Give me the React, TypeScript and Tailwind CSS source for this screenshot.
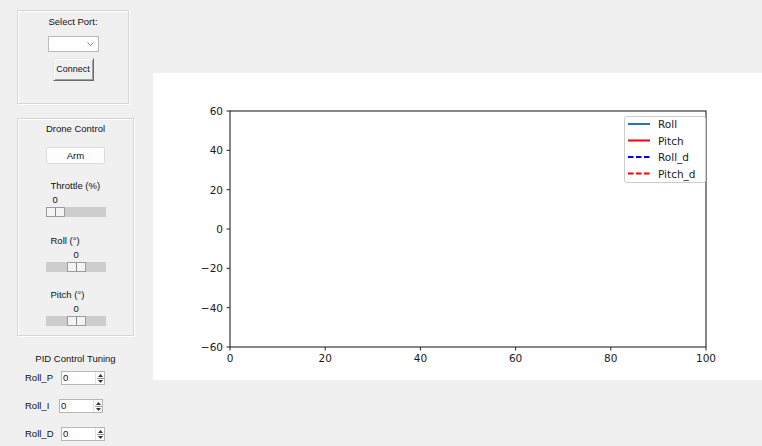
import React from "react";

// plot area inside the white canvas (canvas origin = 0,0)
const AX = { left: 77, right: 553, top: 38, bottom: 274 };
const yTicks = [60, 40, 20, 0, -20, -40, -60];
const xTicks = [0, 20, 40, 60, 80, 100];

const yPos = (v: number) => AX.top + ((60 - v) / 120) * (AX.bottom - AX.top);
const xPos = (v: number) => AX.left + (v / 100) * (AX.right - AX.left);
const fmt = (v: number) => (v < 0 ? `\u2212${Math.abs(v)}` : `${v}`);

const legend = [
  { label: "Roll", color: "#1f77b4", dash: undefined },
  { label: "Pitch", color: "#ff0000", dash: undefined },
  { label: "Roll_d", color: "#0000ff", dash: "5.5 2.5" },
  { label: "Pitch_d", color: "#ff0000", dash: "5.5 2.5" },
];

function Plot() {
  return (
    <svg width="609" height="307" className="block" style={{ fontFamily: '"DejaVu Sans", sans-serif' }}>
      <rect x={AX.left} y={AX.top} width={AX.right - AX.left} height={AX.bottom - AX.top} fill="#fff" stroke="#262626" strokeWidth="1.1" />
      {yTicks.map((v) => (
        <g key={v}>
          <line x1={AX.left - 3.5} x2={AX.left} y1={yPos(v)} y2={yPos(v)} stroke="#262626" />
          <text x={AX.left - 7} y={yPos(v)} fontSize="10.5" fill="#1a1a1a" textAnchor="end" dominantBaseline="central">
            {fmt(v)}
          </text>
        </g>
      ))}
      {xTicks.map((v) => (
        <g key={v}>
          <line x1={xPos(v)} x2={xPos(v)} y1={AX.bottom} y2={AX.bottom + 3.5} stroke="#262626" />
          <text x={xPos(v)} y={AX.bottom + 11} fontSize="10.5" fill="#1a1a1a" textAnchor="middle" dominantBaseline="central">
            {v}
          </text>
        </g>
      ))}
      <rect x="471.5" y="43.5" width="81" height="66" rx="2" fill="#fff" fillOpacity="0.8" stroke="#cccccc" />
      {legend.map((l, i) => {
        const y = 51 + i * 16.5;
        return (
          <g key={l.label}>
            <line x1="475" x2="497" y1={y} y2={y} stroke={l.color} strokeWidth="2" strokeDasharray={l.dash} />
            <text x="505" y={y} fontSize="10.5" fill="#1a1a1a" dominantBaseline="central">
              {l.label}
            </text>
          </g>
        );
      })}
    </svg>
  );
}

function Scale({ label, thumb, labelTop }: { label: string; thumb: number; labelTop: string }) {
  // thumb = left offset of the slider knob inside the 60px trough
  return (
    <div className={`w-[60px] flex flex-col ${labelTop}`}>
      <div className="pl-[5px] leading-[12px]">{label}</div>
      <div className="mt-[2px] leading-[12px]" style={{ paddingLeft: thumb + 7 }}>
        0
      </div>
      <div className="mt-[1px] h-[10px] bg-[#cdcdcd] flex">
        <div
          className="h-[10px] w-[19px] bg-[#f4f4f4] border border-[#9c9c9c] flex justify-center"
          style={{ marginLeft: thumb }}
        >
          <div className="w-px h-full bg-[#8a8a8a]" />
        </div>
      </div>
    </div>
  );
}

function Spin({ label, labelW }: { label: string; labelW: string }) {
  return (
    <div className="flex items-center h-[14px] pl-[8px]">
      <div className={`${labelW} leading-[12px]`}>{label}</div>
      <div className="w-[44px] h-[14px] bg-white border border-[#b6b6b6] flex items-center">
        <span className="flex-1 pl-[1px] leading-[12px]">0</span>
        <div className="w-[9px] h-full flex flex-col items-center justify-center gap-[1px] border-l border-[#e2e2e2]">
          <svg width="5" height="3" viewBox="0 0 5 3">
            <path d="M2.5 0L5 3H0z" fill="#333" />
          </svg>
          <div className="w-[7px] h-px bg-[#9a9a9a]" />
          <svg width="5" height="3" viewBox="0 0 5 3">
            <path d="M0 0h5L2.5 3z" fill="#333" />
          </svg>
        </div>
      </div>
    </div>
  );
}

const frame = "border border-[#d6d6d6] shadow-[inset_1px_1px_0_#ffffff,1px_1px_0_#ffffff]";

export default function App() {
  return (
    <div
      className="w-[762px] h-[446px] bg-[#f0f0f0] flex text-[9.5px] text-[#111] overflow-hidden"
      style={{ fontFamily: '"Liberation Sans", Arial, sans-serif' }}
    >
      {/* controls column */}
      <div className="w-[153px] shrink-0 pl-[17px] pt-[10px] flex flex-col">
        <div className={`w-[112px] h-[94px] ${frame} flex flex-col items-center pt-[5px]`}>
          <div className="leading-[12px]">Select Port:</div>
          <div className="mt-[8px] w-[51px] h-[16px] bg-white border border-[#b9b9b9] flex items-center justify-end pr-[4px]">
            <svg width="7" height="4" viewBox="0 0 7 4">
              <path d="M0.5 0.5L3.5 3.5L6.5 0.5" fill="none" stroke="#777" strokeWidth="0.9" />
            </svg>
          </div>
          <button className="mt-[6px] w-[41px] h-[23px] px-0 bg-[#f0f0f0] border border-t-[#e6e6e6] border-l-[#e6e6e6] border-r-[#6a6a6a] border-b-[#6a6a6a] shadow-[inset_1px_1px_0_#ffffff,inset_-1px_-1px_0_#a0a0a0] text-[9px] leading-none">
            Connect
          </button>
        </div>

        <div className={`mt-[14px] w-[117px] h-[218px] ${frame} flex flex-col items-center pt-[4px]`}>
          <div className="leading-[12px]">Drone Control</div>
          <button className="mt-[12px] w-[59px] h-[17px] bg-[#fdfdfd] border border-[#dcdcdc] rounded-[2px] text-[9.5px] leading-none">
            Arm
          </button>
          <Scale label="Throttle (%)" thumb={0} labelTop="mt-[16px]" />
          <Scale label={"Roll (\u00b0)"} thumb={21} labelTop="mt-[18px]" />
          <Scale label={"Pitch (\u00b0)"} thumb={21} labelTop="mt-[17px]" />
        </div>

        <div className="w-[117px] mt-[17px] text-center leading-[12px]">PID Control Tuning</div>
        <div className="mt-[6px] flex flex-col gap-[14px]">
          <Spin label="Roll_P" labelW="w-[36px]" />
          <Spin label="Roll_I" labelW="w-[34px]" />
          <Spin label="Roll_D" labelW="w-[36px]" />
        </div>
      </div>

      {/* matplotlib canvas */}
      <div className="flex-1 mt-[73px] h-[307px] bg-white">
        <Plot />
      </div>
    </div>
  );
}
